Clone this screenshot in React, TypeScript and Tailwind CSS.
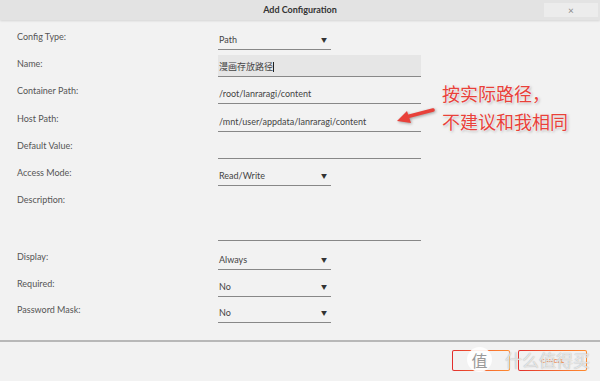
import React from "react";

const font = { fontFamily: '"Lato", "Noto Sans CJK SC", sans-serif' };

function Label({ children }: { children: React.ReactNode }) {
  return (
    <div className="w-[218px] shrink-0 pl-[17px] pt-[3px] text-[9px] leading-[12px] text-[#555]">
      {children}
    </div>
  );
}

function Select({ value }: { value: string }) {
  return (
    <div className="flex h-[22px] w-[113px] items-center justify-between border-b border-[#888] pl-[1px] pr-[4px] pt-[2px] text-[9px] text-[#444]">
      <span>{value}</span>
      <span className="text-[6px] text-[#333]">▼</span>
    </div>
  );
}

function Input({ value, bg, h = 22, caret }: { value?: string; bg?: boolean; h?: number; caret?: boolean }) {
  return (
    <div
      className={`flex w-[203px] items-center border-b border-[#888] pl-[1px] pt-[2px] text-[9px] text-[#444] ${bg ? "bg-[#e6e6e6]" : ""}`}
      style={{ height: h }}
    >
      <span>{value}</span>
      {caret && <span className="inline-block h-[10px] w-[1px] bg-[#222]" />}
    </div>
  );
}

function Row({ h, label, children }: { h: number; label: string; children?: React.ReactNode }) {
  return (
    <div className="flex items-start" style={{ height: h }}>
      <Label>{label}</Label>
      <div>{children}</div>
    </div>
  );
}

function Btn({ w, text }: { w: number; text: string }) {
  return (
    <div className="rounded-[2px] bg-gradient-to-r from-[#e22d2d] to-[#ff8c2f] p-[1px]" style={{ width: w }}>
      <div className="flex h-[19px] items-center justify-center rounded-[1px] bg-[#f2f2f2] text-[6px] font-bold text-[#f08a4b]">
        {text}
      </div>
    </div>
  );
}

export default function App() {
  return (
    <div className="relative h-[381px] w-[600px] overflow-hidden bg-[#f2f2f2]" style={font}>
      {/* header */}
      <div className="relative flex h-[20px] items-center justify-center bg-[#e3e3e3] shadow-[0_1px_2px_rgba(0,0,0,0.12)]">
        <span className="text-[9px] font-bold text-[#333]">Add Configuration</span>
        <div className="absolute right-[2px] top-[3px] flex h-[14px] w-[54px] items-center justify-center bg-[#ececec] text-[10px] text-[#888]">
          ×
        </div>
      </div>

      {/* form */}
      <div className="pt-[8px]">
        <Row h={27} label="Config Type:">
          <Select value="Path" />
        </Row>
        <Row h={27} label="Name:">
          <Input value="漫画存放路径" bg caret />
        </Row>
        <Row h={28} label="Container Path:">
          <Input value="/root/lanraragi/content" />
        </Row>
        <Row h={27} label="Host Path:">
          <Input value="/mnt/user/appdata/lanraragi/content" />
        </Row>
        <Row h={27} label="Default Value:">
          <Input />
        </Row>
        <Row h={27} label="Access Mode:">
          <Select value="Read/Write" />
        </Row>
        <Row h={57} label="Description:">
          <Input h={50} />
        </Row>
        <Row h={27} label="Display:">
          <Select value="Always" />
        </Row>
        <Row h={26} label="Required:">
          <Select value="No" />
        </Row>
        <Row h={27} label="Password Mask:">
          <Select value="No" />
        </Row>
      </div>

      {/* footer */}
      <div className="absolute left-0 right-0 top-[340px] h-[2px] bg-[#b8b8b8]" />
      <div className="absolute left-[452px] top-[350px] flex gap-[8px]">
        <Btn w={58} text="ADD" />
        <Btn w={69} text="CANCEL" />
      </div>
      {/* watermark */}
      <div
        className="absolute left-[467px] top-[347px] flex h-[25px] w-[25px] items-center justify-center rounded-full bg-white/90 text-[16px] leading-none text-[#999]"
        style={{ fontFamily: '"Noto Sans CJK SC", sans-serif' }}
      >
        值
      </div>
      <div
        className="absolute left-[505px] top-[349px] text-[17px] leading-[22px] text-white/70"
        style={{ fontFamily: '"Noto Sans CJK SC", sans-serif', textShadow: "0 0 1px #999" }}
      >
        什么值得买
      </div>

      {/* annotation */}
      <div
        className="absolute left-[442px] top-[79px] text-[18px] leading-[28px] text-[#e8413a]"
        style={{ fontFamily: '"Noto Sans CJK SC", sans-serif', textShadow: "0 0 2px #fff, 0 0 2px #fff, 1px 1px 3px rgba(0,0,0,0.35)" }}
      >
        <div>按实际路径，</div>
        <div>不建议和我相同</div>
      </div>
      <svg className="absolute left-[392px] top-[104px]" width="48" height="24" viewBox="0 0 48 24" style={{ filter: "drop-shadow(1px 1px 1.5px rgba(0,0,0,0.35))" }}>
        <path d="M41 6 L14 13" stroke="#e8413a" strokeWidth="3.5" strokeLinecap="round" />
        <path d="M5 17 L15 7 L19 19 Z" fill="#e8413a" />
      </svg>
    </div>
  );
}
